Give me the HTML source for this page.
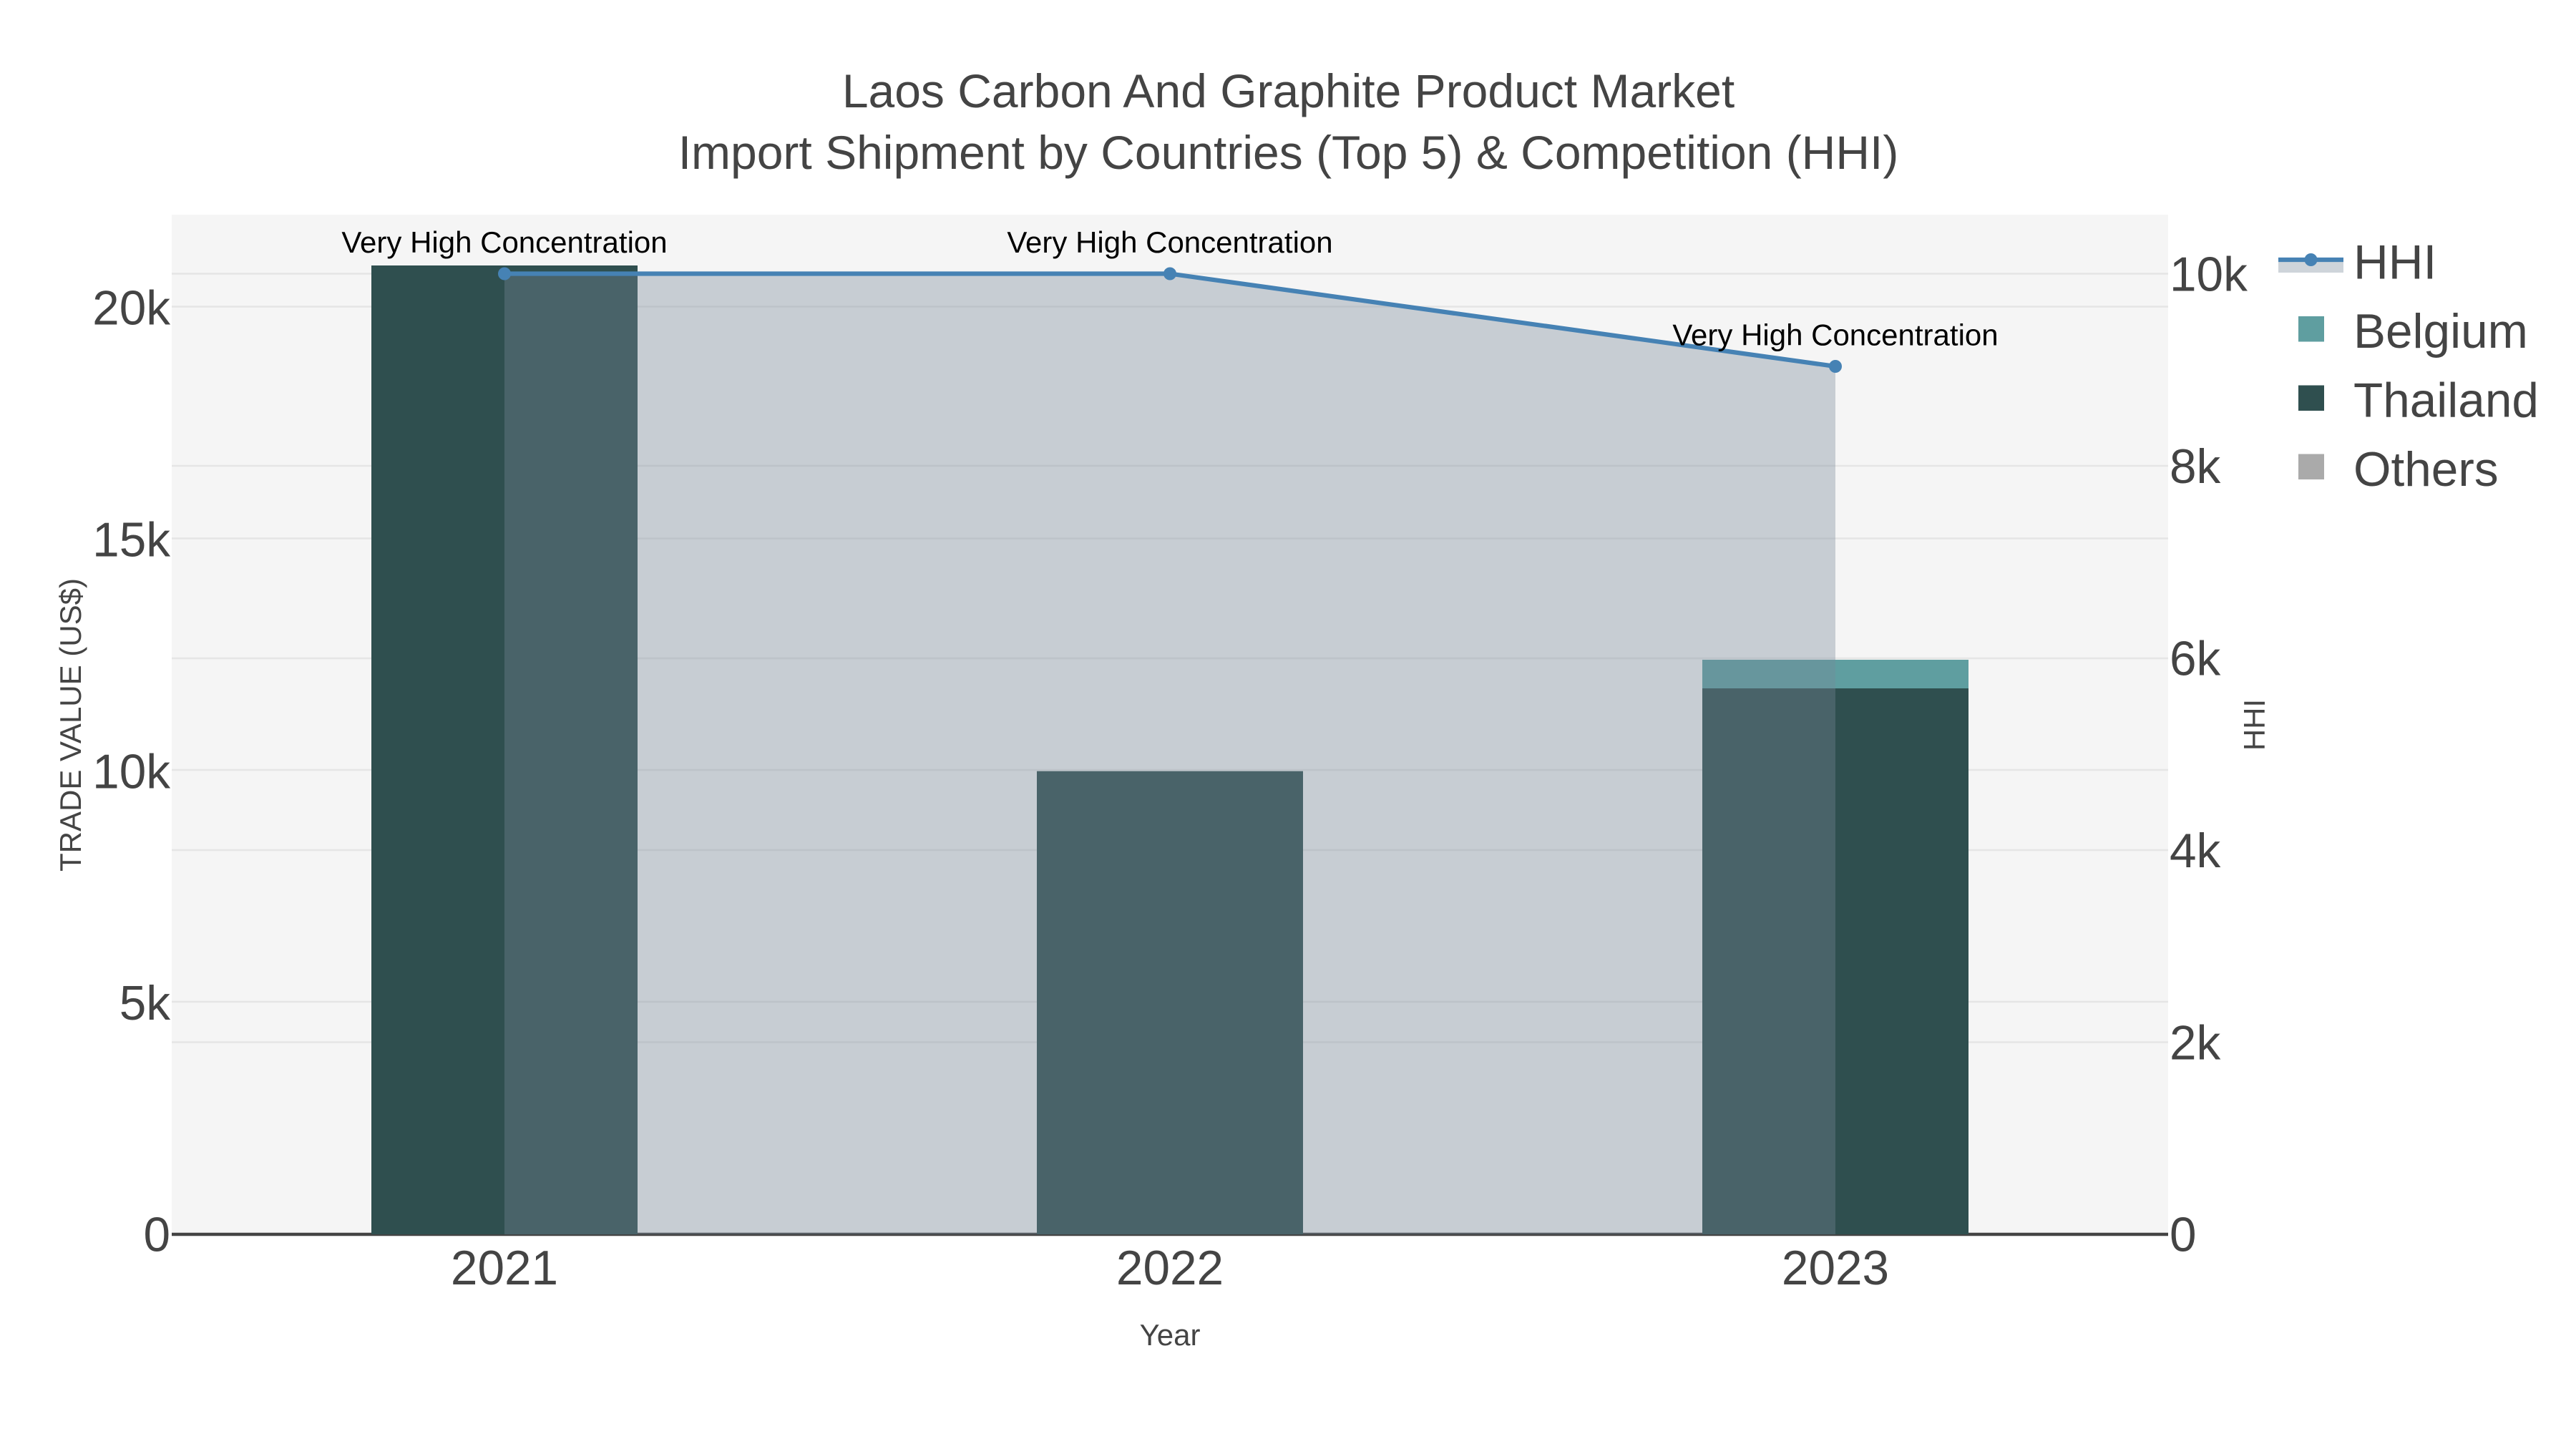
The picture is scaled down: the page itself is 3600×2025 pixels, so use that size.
<!DOCTYPE html>
<html lang="en">
<head>
<meta charset="utf-8">
<title>Laos Carbon And Graphite Product Market</title>
<style>
html,body{margin:0;padding:0;background:#fff;width:3600px;height:2025px;overflow:hidden}
svg{display:block}
text{font-family:"Liberation Sans",Arial,sans-serif;fill:#444}
</style>
</head>
<body>
<svg xmlns="http://www.w3.org/2000/svg" width="3600" height="2025" viewBox="0 0 3600 2025">
<rect width="3600" height="2025" fill="#fff"/>
<rect x="240" y="300" width="2790" height="1425" fill="#f5f5f5"/>
<g stroke="#e5e5e5" stroke-width="2.5">
<line x1="240" x2="3030" y1="428.5" y2="428.5"/>
<line x1="240" x2="3030" y1="752.5" y2="752.5"/>
<line x1="240" x2="3030" y1="1076" y2="1076"/>
<line x1="240" x2="3030" y1="1400" y2="1400"/>
<line x1="240" x2="3030" y1="382.5" y2="382.5"/>
<line x1="240" x2="3030" y1="651" y2="651"/>
<line x1="240" x2="3030" y1="920" y2="920"/>
<line x1="240" x2="3030" y1="1188" y2="1188"/>
<line x1="240" x2="3030" y1="1456.5" y2="1456.5"/>
</g>
<line x1="240" x2="3030" y1="1725" y2="1725" stroke="#444" stroke-width="4.5"/>
<rect x="519" y="371" width="372" height="1354" fill="#2f4f4f"/>
<rect x="1449" y="1077.7" width="372" height="647.3" fill="#2f4f4f"/>
<rect x="2379" y="962" width="372" height="763" fill="#2f4f4f"/>
<rect x="2379" y="922" width="372" height="40" fill="#5f9ea0"/>
<polygon points="705,382.5 1635,382.5 2565,512 2565,1725 705,1725" fill="#778899" fill-opacity="0.36"/>
<polyline points="705,382.5 1635,382.5 2565,512" fill="none" stroke="#4682b4" stroke-width="6.25"/>
<circle cx="705" cy="382.5" r="9" fill="#4682b4"/>
<circle cx="1635" cy="382.5" r="9" fill="#4682b4"/>
<circle cx="2565" cy="512" r="9" fill="#4682b4"/>

<g text-anchor="middle">
<text x="1800.5" y="150" font-size="66">Laos Carbon And Graphite Product Market</text>
<text x="1800.5" y="236" font-size="66">Import Shipment by Countries (Top 5) &amp; Competition (HHI)</text>
</g>

<g style="font-size:42px" text-anchor="middle">
<text x="705" y="353" style="fill:#000">Very High Concentration</text>
<text x="1635" y="353" style="fill:#000">Very High Concentration</text>
<text x="2565" y="482.5" style="fill:#000">Very High Concentration</text>
</g>

<g font-size="67.5" text-anchor="end">
<text x="238" y="453.5">20k</text>
<text x="238" y="777.5">15k</text>
<text x="238" y="1101.5">10k</text>
<text x="238" y="1425">5k</text>
<text x="238" y="1748.5">0</text>
</g>
<g font-size="67.5" text-anchor="start">
<text x="3032" y="406.5">10k</text>
<text x="3032" y="675">8k</text>
<text x="3032" y="943.5">6k</text>
<text x="3032" y="1212">4k</text>
<text x="3032" y="1480.5">2k</text>
<text x="3032" y="1748.5">0</text>
</g>
<g font-size="67.5" text-anchor="middle">
<text x="705" y="1795">2021</text>
<text x="1635" y="1795">2022</text>
<text x="2565" y="1795">2023</text>
</g>

<text x="1635" y="1880" font-size="42" text-anchor="middle">Year</text>
<text transform="translate(113 1013) rotate(-90)" font-size="42" text-anchor="middle">TRADE VALUE (US$)</text>
<text transform="translate(3165 1013) rotate(-90)" font-size="42" text-anchor="middle">HHI</text>

<rect x="3184" y="363" width="91" height="18" fill="#778899" fill-opacity="0.36"/>
<line x1="3184" x2="3275" y1="363" y2="363" stroke="#4682b4" stroke-width="6.25"/>
<circle cx="3229.5" cy="363" r="9" fill="#4682b4"/>
<rect x="3212" y="442" width="36" height="35.5" fill="#5f9ea0"/>
<rect x="3212" y="538.5" width="36" height="35.5" fill="#2f4f4f"/>
<rect x="3212" y="634.5" width="36" height="35.5" fill="#aaaaaa"/>
<g font-size="67.5">
<text x="3289" y="389.5">HHI</text>
<text x="3289" y="486">Belgium</text>
<text x="3289" y="582.5">Thailand</text>
<text x="3289" y="679">Others</text>
</g>
</svg>
</body>
</html>
